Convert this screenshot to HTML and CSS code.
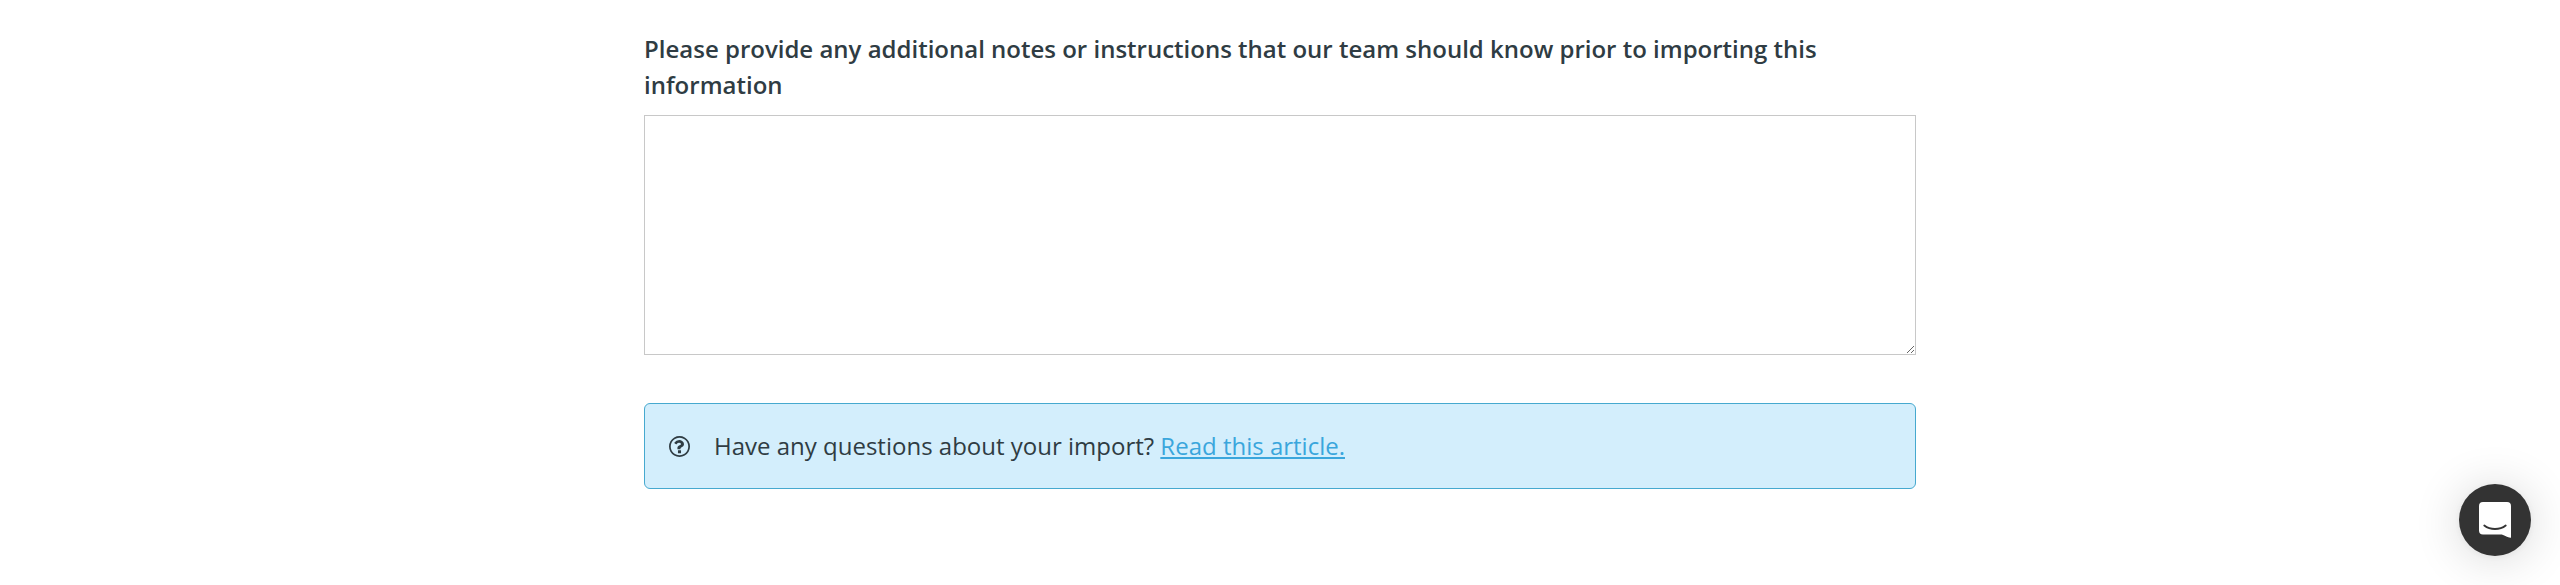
FILE: index.html
```html
<!DOCTYPE html>
<html lang="en">
<head>
    <meta charset="UTF-8">
    <meta name="viewport" content="width=device-width, initial-scale=1.0">
    <title>Import Notes</title>
    <link rel="stylesheet" href="styles.css">
</head>
<body>
    <form class="import-form">
        <div class="form-group">
            <label class="form-label" for="notes">Please provide any additional notes or instructions that our team should know prior to importing this information</label>
            <textarea id="notes" name="notes" class="form-textarea"></textarea>
        </div>

        <div class="alert alert-info">
            <svg class="alert-icon" viewBox="0 0 1536 1536" aria-hidden="true">
                <path fill="currentColor" d="M880 1072v160q0 14-9 23t-23 9h-160q-14 0-23-9t-9-23v-160q0-14 9-23t23-9h160q14 0 23 9t9 23zm216-480q0 50-15 90t-45.500 69-52 44-59.500 36q-32 18-46.500 28t-26 24-11.500 29v32q0 14-9 23t-23 9h-160q-14 0-23-9t-9-23v-68q0-35 10.500-64.500t24-47.500 39-35.500 41-25.500 44.500-21q53-25 75-43t22-49q0-42-43.500-71.500t-95.500-29.500q-56 0-95 27-29 20-80 83-9 12-25 12-11 0-19-6l-108-82q-10-7-12-20t5-23q122-192 349-192 129 0 238.500 89.500t109.500 214.500zm-328-464q-130 0-248.500 51t-204 136.500-136.500 204-51 248.500 51 248.500 136.500 204 204 136.500 248.500 51 248.500-51 204-136.500 136.500-204 51-248.500-51-248.500-136.500-204-204-136.500-248.500-51zm768 640q0 209-103 385.500t-279.500 279.500-385.500 103-385.500-103-279.500-279.500-103-385.500 103-385.500 279.500-279.500 385.500-103 385.500 103 279.500 279.500 103 385.500z"/>
            </svg>
            <p class="alert-text">Have any questions about your import? <a href="#">Read this article.</a></p>
        </div>
    </form>

    <button type="button" class="chat-launcher" aria-label="Open chat">
        <svg viewBox="0 0 32 36" aria-hidden="true">
            <path fill="#fff" d="M4 0h24a4 4 0 0 1 4 4v32s-4.100-.900-9.200-3.400H4a4 4 0 0 1-4-4V4a4 4 0 0 1 4-4z"/>
            <path fill="none" stroke="#333" stroke-width="1.900" stroke-linecap="round" d="M5.300 23.500c6 4.700 15.400 4.700 21.400 0"/>
        </svg>
    </button>
</body>
</html>
```

FILE: styles.css
```css
* {
    margin: 0;
    padding: 0;
    box-sizing: border-box;
}

body {
    font-family: 'Open Sans', 'Noto Sans', sans-serif;
    font-size: 24px;
    line-height: 36px;
    color: #2f3c43;
    background: #fff;
}

.import-form {
    width: 1272px;
    margin: 0 auto;
    padding-top: 31px;
}

.form-group {
    display: flex;
    flex-direction: column;
    gap: 12px;
    margin-bottom: 48px;
}

.form-label {
    font-weight: 600;
}

.form-textarea {
    display: block;
    width: 100%;
    height: 240px;
    padding: 12px;
    border: 1px solid #c8c8c8;
    background: #fff;
    font: inherit;
    color: inherit;
    resize: vertical;
}

.alert {
    display: flex;
    align-items: center;
    gap: 24px;
    padding: 24px;
    border: 1px solid #46a9cf;
    border-radius: 6px;
}

.alert-info {
    background: #d3eefc;
}

.alert-icon {
    width: 21px;
    height: 21px;
    flex-shrink: 0;
}

.alert-text a {
    color: #3aa6dc;
    text-decoration: underline;
}

.chat-launcher {
    position: fixed;
    right: 29px;
    bottom: 29px;
    display: flex;
    align-items: center;
    justify-content: center;
    width: 72px;
    height: 72px;
    border: none;
    border-radius: 50%;
    background: #333;
    box-shadow: 0 1px 9px rgba(0, 0, 0, 0.06), 0 3px 48px rgba(0, 0, 0, 0.16);
    cursor: pointer;
}

.chat-launcher svg {
    width: 32px;
    height: 36px;
}
```
